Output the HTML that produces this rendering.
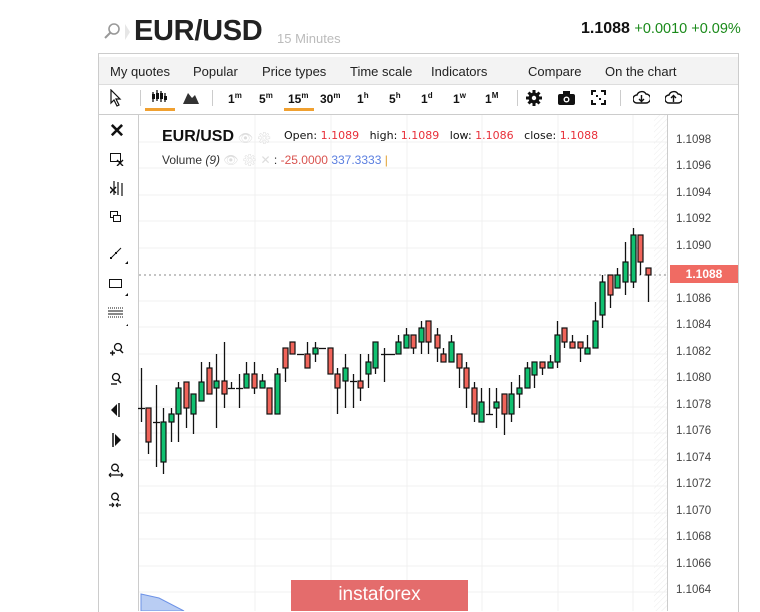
<!DOCTYPE html>
<html><head><meta charset="utf-8"><style>
body{margin:0;width:760px;height:611px;background:#fff;overflow:hidden;font-family:"Liberation Sans",sans-serif;position:relative}
.a{position:absolute}
.menu span{position:absolute;top:7px;font-size:13px;color:#222}
.tb span{position:absolute;top:6px;font-size:12px;font-weight:bold;color:#111}
.tb sup{font-size:8px}
.ax{position:absolute;left:676px;font-size:11.5px;color:#444}
.lt{position:absolute;left:0;width:36px;text-align:center;font-size:13px;color:#111}
</style></head><body>
<svg class="a" style="left:103px;top:22px" width="18" height="20"><circle cx="11" cy="7" r="5" fill="none" stroke="#999" stroke-width="1.6"/><line x1="7.5" y1="10.5" x2="2" y2="16" stroke="#999" stroke-width="2"/></svg>
<svg class="a" style="left:124px;top:24px" width="8" height="20"><path d="M1 0L6 8L1 16Z" fill="#e6e6e6"/></svg>
<div class="a" style="left:134px;top:15px;font-size:29px;font-weight:bold;color:#222;letter-spacing:-0.3px">EUR/USD</div>
<div class="a" style="left:277px;top:31px;font-size:13px;color:#bbb">15 Minutes</div>
<div class="a" style="left:581px;top:20px;font-size:16px;color:#111"><b>1.1088</b> <span style="color:#1a8a1a;font-size:14.5px">+0.0010 +0.09%</span></div>

<div class="a" style="left:98px;top:53px;width:639px;height:61px;border:1px solid #ccc;border-bottom:none"></div>
<div class="a menu" style="left:99px;top:57px;width:639px;height:27px;background:#f3f3f3;border-bottom:1px solid #ddd">
<span style="left:11px">My quotes</span><span style="left:94px">Popular</span><span style="left:163px">Price types</span><span style="left:251px">Time scale</span><span style="left:332px">Indicators</span><span style="left:429px">Compare</span><span style="left:506px">On the chart</span></div>
<div class="a tb" style="left:99px;top:85px;width:639px;height:28px">
<svg class="a" style="left:11px;top:4px" width="12" height="18"><path d="M1 1L1 14L4 11L7 17L9 16L6 10L10 10Z" fill="#fff" stroke="#111" stroke-width="1.2"/></svg>
<div class="a" style="left:41px;top:5px;width:1px;height:16px;background:#ccc"></div>
<svg class="a" style="left:52px;top:5px" width="16" height="14"><g stroke="#111" stroke-width="1.3"><line x1="2" y1="2" x2="2" y2="12"/><line x1="6" y1="0" x2="6" y2="11"/><line x1="10" y1="1" x2="10" y2="12"/><line x1="14" y1="3" x2="14" y2="12"/></g><g fill="#111"><rect x="1" y="4" width="3" height="5"/><rect x="5" y="3" width="3" height="6"/><rect x="9" y="3" width="3" height="6"/><rect x="13" y="6" width="3" height="4"/></g></svg>
<div class="a" style="left:46px;top:23px;width:30px;height:3px;background:#f0a030"></div>
<svg class="a" style="left:84px;top:5px" width="16" height="14"><path d="M0 14L5 3L9 8L12 5L16 14Z" fill="#333"/></svg>
<div class="a" style="left:113px;top:5px;width:1px;height:16px;background:#ccc"></div>
<span style="left:129px">1<sup>m</sup></span><span style="left:160px">5<sup>m</sup></span><span style="left:189px">15<sup>m</sup></span><span style="left:221px">30<sup>m</sup></span><span style="left:258px">1<sup>h</sup></span><span style="left:290px">5<sup>h</sup></span><span style="left:322px">1<sup>d</sup></span><span style="left:354px">1<sup>w</sup></span><span style="left:386px">1<sup>M</sup></span>
<div class="a" style="left:185px;top:23px;width:30px;height:3px;background:#f0a030"></div>
<div class="a" style="left:418px;top:5px;width:1px;height:16px;background:#ccc"></div>
<svg class="a" style="left:427px;top:5px" width="16" height="16"><circle cx="8" cy="8" r="5.5" fill="#111"/><g stroke="#111" stroke-width="3"><line x1="8" y1="0" x2="8" y2="16"/><line x1="0" y1="8" x2="16" y2="8"/><line x1="2.5" y1="2.5" x2="13.5" y2="13.5"/><line x1="13.5" y1="2.5" x2="2.5" y2="13.5"/></g><circle cx="8" cy="8" r="2.2" fill="#fff"/></svg>
<svg class="a" style="left:459px;top:6px" width="17" height="14"><rect x="0" y="3" width="17" height="11" rx="2" fill="#111"/><rect x="5" y="0" width="7" height="4" fill="#111"/><circle cx="8.5" cy="8.5" r="3" fill="#fff"/><circle cx="8.5" cy="8.5" r="1.6" fill="#111"/></svg>
<svg class="a" style="left:492px;top:5px" width="15" height="15"><g fill="#111"><path d="M0 0H5V2H2V5H0Z"/><path d="M15 0H10V2H13V5H15Z"/><path d="M0 15H5V13H2V10H0Z"/><path d="M15 15H10V13H13V10H15Z"/><rect x="5" y="5" width="2" height="2"/><rect x="8" y="8" width="2" height="2"/></g></svg>
<div class="a" style="left:521px;top:5px;width:1px;height:16px;background:#ccc"></div>
<svg class="a" style="left:534px;top:5px" width="17" height="15"><path d="M4 13A4 4 0 0 1 4 5A5 5 0 0 1 13 4A4.5 4.5 0 0 1 13 13Z" fill="none" stroke="#111" stroke-width="1.4"/><path d="M8.5 5V11M6 9L8.5 11.5L11 9" fill="none" stroke="#111" stroke-width="1.4"/></svg>
<svg class="a" style="left:566px;top:5px" width="17" height="15"><path d="M4 13A4 4 0 0 1 4 5A5 5 0 0 1 13 4A4.5 4.5 0 0 1 13 13Z" fill="none" stroke="#111" stroke-width="1.4"/><path d="M8.5 12V6M6 8L8.5 5.5L11 8" fill="none" stroke="#111" stroke-width="1.4"/></svg>
</div>

<div class="a" style="left:98px;top:114px;width:639px;height:497px;border:1px solid #ccc;border-bottom:none"></div>
<div class="a" style="left:138px;top:115px;width:1px;height:496px;background:#ccc"></div>
<div class="a" style="left:667px;top:115px;width:1px;height:496px;background:#ccc"></div>

<div class="a" style="left:99px;top:115px;width:39px;height:496px">
<div class="lt" style="top:5px;font-size:19px;font-weight:bold">✕</div>
<svg class="a" style="left:11px;top:38px" width="14" height="13"><rect x="0.5" y="0.5" width="10" height="8" fill="none" stroke="#111"/><path d="M7 7L13 13M13 7L7 13" stroke="#111" stroke-width="1.4"/></svg>
<svg class="a" style="left:11px;top:66px" width="15" height="15"><g stroke="#111" stroke-width="1.2"><line x1="4" y1="0" x2="4" y2="14"/><line x1="8" y1="1" x2="8" y2="14"/><line x1="12" y1="2" x2="12" y2="15"/><path d="M0 6L6 12M6 6L0 12" stroke-width="1.5"/></g></svg>
<svg class="a" style="left:11px;top:96px" width="12" height="12"><rect x="0.5" y="0.5" width="7" height="6" fill="none" stroke="#111"/><rect x="3.5" y="4.5" width="7" height="6" fill="#fff" stroke="#111"/></svg>
<svg class="a" style="left:10px;top:131px" width="20" height="20"><line x1="2" y1="12" x2="12" y2="2" stroke="#111"/><rect x="1" y="11" width="2" height="2" fill="#111"/><rect x="6" y="6" width="2" height="2" fill="#111"/><path d="M19 18V15L16 18Z" fill="#111"/></svg>
<svg class="a" style="left:10px;top:164px" width="20" height="20"><rect x="0.5" y="0.5" width="12" height="8" fill="none" stroke="#111"/><path d="M19 17V14L16 17Z" fill="#111"/></svg>
<svg class="a" style="left:9px;top:191px" width="20" height="20"><g stroke="#111"><line x1="0" y1="2" x2="15" y2="2" stroke-dasharray="1 1"/><line x1="0" y1="5" x2="15" y2="5"/><line x1="0" y1="8" x2="15" y2="8"/><line x1="0" y1="11" x2="15" y2="11" stroke-dasharray="1 1"/></g><path d="M21 20V17L18 20Z" fill="#111"/></svg>
<svg class="a" style="left:10px;top:227px" width="16" height="16"><circle cx="9" cy="5" r="3.5" fill="none" stroke="#111" stroke-width="1.3"/><line x1="11" y1="8" x2="14" y2="11" stroke="#111" stroke-width="1.5"/><path d="M1 11H6M3.5 8.5V13.5" stroke="#111" stroke-width="1.4"/></svg>
<svg class="a" style="left:10px;top:257px" width="16" height="16"><circle cx="7" cy="5" r="3.5" fill="none" stroke="#111" stroke-width="1.3"/><line x1="9" y1="8" x2="12" y2="11" stroke="#111" stroke-width="1.5"/><path d="M2 12H8" stroke="#111" stroke-width="1.4"/></svg>
<svg class="a" style="left:12px;top:288px" width="12" height="14"><path d="M6 1L0 7L6 13Z" fill="#111"/><line x1="8" y1="0" x2="8" y2="14" stroke="#111" stroke-width="1.5"/></svg>
<svg class="a" style="left:13px;top:318px" width="12" height="14"><path d="M3 1L9 7L3 13Z" fill="#111"/><line x1="1" y1="0" x2="1" y2="14" stroke="#111" stroke-width="1.5"/></svg>
<svg class="a" style="left:9px;top:348px" width="18" height="16"><circle cx="7" cy="4.5" r="3.3" fill="none" stroke="#111" stroke-width="1.3"/><line x1="9" y1="7" x2="11" y2="9" stroke="#111" stroke-width="1.4"/><path d="M1 12H15M1 12L3 10M1 12L3 14M15 12L13 10M15 12L13 14" stroke="#111" stroke-width="1.2" fill="none"/></svg>
<svg class="a" style="left:9px;top:377px" width="18" height="18"><circle cx="7" cy="4.5" r="3.3" fill="none" stroke="#111" stroke-width="1.3"/><line x1="9" y1="7" x2="11" y2="9" stroke="#111" stroke-width="1.4"/><path d="M1 13H6M6 13L4 11M6 13L4 15M13 13H8M8 13L10 11M8 13L10 15" stroke="#111" stroke-width="1.2" fill="none"/></svg>
</div>

<svg class="a" style="left:139px;top:115px" width="528" height="496">
<defs><pattern id="h" width="4" height="4" patternUnits="userSpaceOnUse" patternTransform="rotate(45)"><line x1="0" y1="0" x2="0" y2="4" stroke="#ececec" stroke-width="1"/></pattern></defs>
<rect x="515" y="0" width="13" height="496" fill="url(#h)"/>
<g stroke="#f0f0f0" stroke-width="1">
<line x1="116" y1="0" x2="116" y2="496"/><line x1="192" y1="0" x2="192" y2="496"/><line x1="268" y1="0" x2="268" y2="496"/><line x1="343" y1="0" x2="343" y2="496"/><line x1="419" y1="0" x2="419" y2="496"/><line x1="494" y1="0" x2="494" y2="496"/>
<line x1="0" y1="27" x2="528" y2="27"/><line x1="0" y1="53" x2="528" y2="53"/><line x1="0" y1="80" x2="528" y2="80"/><line x1="0" y1="106" x2="528" y2="106"/><line x1="0" y1="133" x2="528" y2="133"/><line x1="0" y1="186" x2="528" y2="186"/><line x1="0" y1="212" x2="528" y2="212"/><line x1="0" y1="239" x2="528" y2="239"/><line x1="0" y1="265" x2="528" y2="265"/><line x1="0" y1="292" x2="528" y2="292"/><line x1="0" y1="318" x2="528" y2="318"/><line x1="0" y1="345" x2="528" y2="345"/><line x1="0" y1="371" x2="528" y2="371"/><line x1="0" y1="398" x2="528" y2="398"/><line x1="0" y1="424" x2="528" y2="424"/><line x1="0" y1="451" x2="528" y2="451"/><line x1="0" y1="477" x2="528" y2="477"/>
</g>
<line x1="0" y1="160" x2="528" y2="160" stroke="#888" stroke-dasharray="2 3"/>
</svg>

<div class="a" style="left:162px;top:128px;font-size:16px;font-weight:bold;color:#111">EUR/USD</div>
<div class="a" style="left:238px;top:131px;font-size:12px;color:#ddd">👁 ⚙</div>
<div class="a" style="left:284px;top:129px;font-size:12px;color:#111;font-family:'DejaVu Sans',sans-serif;font-size:11px">Open: <span style="color:#e8303a">1.1089</span> &nbsp; high: <span style="color:#e8303a">1.1089</span> &nbsp; low: <span style="color:#e8303a">1.1086</span> &nbsp; close: <span style="color:#e8303a">1.1088</span></div>
<div class="a" style="left:162px;top:153px;font-size:12px;color:#333">Volume <i>(9)</i> <span style="color:#ddd">👁 ⚙ ✕</span> : <span style="color:#d9534f">-25.0000</span> <span style="color:#5b7fe0">337.3333</span> <span style="color:#e0a030">|</span></div>

<div class="ax" style="top:134px">1.1098</div><div class="ax" style="top:160px">1.1096</div><div class="ax" style="top:187px">1.1094</div><div class="ax" style="top:213px">1.1092</div><div class="ax" style="top:240px">1.1090</div><div class="ax" style="top:293px">1.1086</div><div class="ax" style="top:319px">1.1084</div><div class="ax" style="top:346px">1.1082</div><div class="ax" style="top:372px">1.1080</div><div class="ax" style="top:399px">1.1078</div><div class="ax" style="top:425px">1.1076</div><div class="ax" style="top:452px">1.1074</div><div class="ax" style="top:478px">1.1072</div><div class="ax" style="top:505px">1.1070</div><div class="ax" style="top:531px">1.1068</div><div class="ax" style="top:558px">1.1066</div><div class="ax" style="top:584px">1.1064</div>
<div class="a" style="left:670px;top:265px;width:68px;height:18px;background:#f06b63;color:#fff;font-size:12px;font-weight:bold;text-align:center;line-height:18px">1.1088</div>

<svg class="a" style="left:139px;top:592px" width="80" height="19"><path d="M2 2L20 6L45 19H2Z" fill="#b9cdf3" stroke="#6d92e6"/></svg>
<div class="a" style="left:291px;top:580px;width:177px;height:31px;background:#e46c6c;color:#fff;font-size:19px;text-align:center;line-height:29px">instaforex</div>

<svg class="a" style="left:0;top:0" width="760" height="611" id="cs"></svg>
<script>
var d=[[141,408,409,368,422,'n'],[148,408,442,408,454,'r'],[156,422,423,385,467,'n'],[163,422,462,408,474,'g'],[171,414,422,408,442,'g'],[178,388,414,382,442,'g'],[186,382,408,382,428,'r'],[193,394,414,394,434,'g'],[201,382,401,362,401,'g'],[209,368,394,362,394,'r'],[216,381,388,354,428,'g'],[224,381,394,342,408,'r'],[231,388,389,382,389,'n'],[239,388,389,374,408,'n'],[246,374,388,362,388,'g'],[254,374,388,362,394,'r'],[262,381,388,374,388,'g'],[269,388,414,388,414,'r'],[277,374,414,368,414,'g'],[285,348,368,348,382,'r'],[292,342,354,342,354,'r'],[300,354,355,354,355,'n'],[307,354,368,342,368,'r'],[315,348,354,342,362,'g'],[322,348,349,348,349,'n'],[330,348,374,348,374,'r'],[337,374,388,368,414,'r'],[345,368,381,354,408,'g'],[353,381,382,374,408,'n'],[360,381,388,354,401,'r'],[368,362,374,354,388,'g'],[375,342,368,342,374,'g'],[384,354,355,348,382,'n'],[391,354,355,354,355,'n'],[398,342,354,335,354,'g'],[406,335,348,328,348,'g'],[413,335,348,335,354,'r'],[421,328,342,321,354,'g'],[428,321,342,321,354,'r'],[437,335,348,328,362,'r'],[443,354,362,348,362,'r'],[451,342,362,335,362,'g'],[459,354,368,354,388,'r'],[466,368,388,362,408,'r'],[474,388,414,382,422,'r'],[481,402,422,388,422,'g'],[489,414,415,388,415,'n'],[496,402,408,388,428,'g'],[504,394,414,394,435,'r'],[511,394,414,382,422,'g'],[519,388,394,375,408,'g'],[527,368,388,362,388,'g'],[534,362,375,362,388,'g'],[542,362,368,362,375,'r'],[550,362,368,355,368,'g'],[557,335,362,321,368,'g'],[564,328,342,328,348,'r'],[572,342,348,335,348,'r'],[580,342,348,342,362,'r'],[587,348,354,335,354,'g'],[595,321,348,302,348,'g'],[602,282,315,275,328,'g'],[610,275,295,275,308,'r'],[617,275,288,268,288,'g'],[625,262,282,242,295,'g'],[633,235,282,228,288,'g'],[640,235,262,235,275,'r'],[648,268,275,268,302,'r']];
var s='';d.forEach(function(c){var x=c[0];s+='<line x1="'+(x+.5)+'" y1="'+c[3]+'" x2="'+(x+.5)+'" y2="'+c[4]+'" stroke="#111" stroke-width="1.3"/>';if(c[5]=='n'){s+='<line x1="'+(x-3)+'" y1="'+(c[1]+.5)+'" x2="'+(x+4)+'" y2="'+(c[1]+.5)+'" stroke="#111" stroke-width="1.3"/>';}else{s+='<rect x="'+(x-2)+'" y="'+c[1]+'" width="5" height="'+(c[2]-c[1])+'" fill="'+(c[5]=='g'?'#10c070':'#f0645a')+'" stroke="#111" stroke-width="1.2"/>';}});
document.getElementById('cs').innerHTML=s;
</script>
</body></html>
